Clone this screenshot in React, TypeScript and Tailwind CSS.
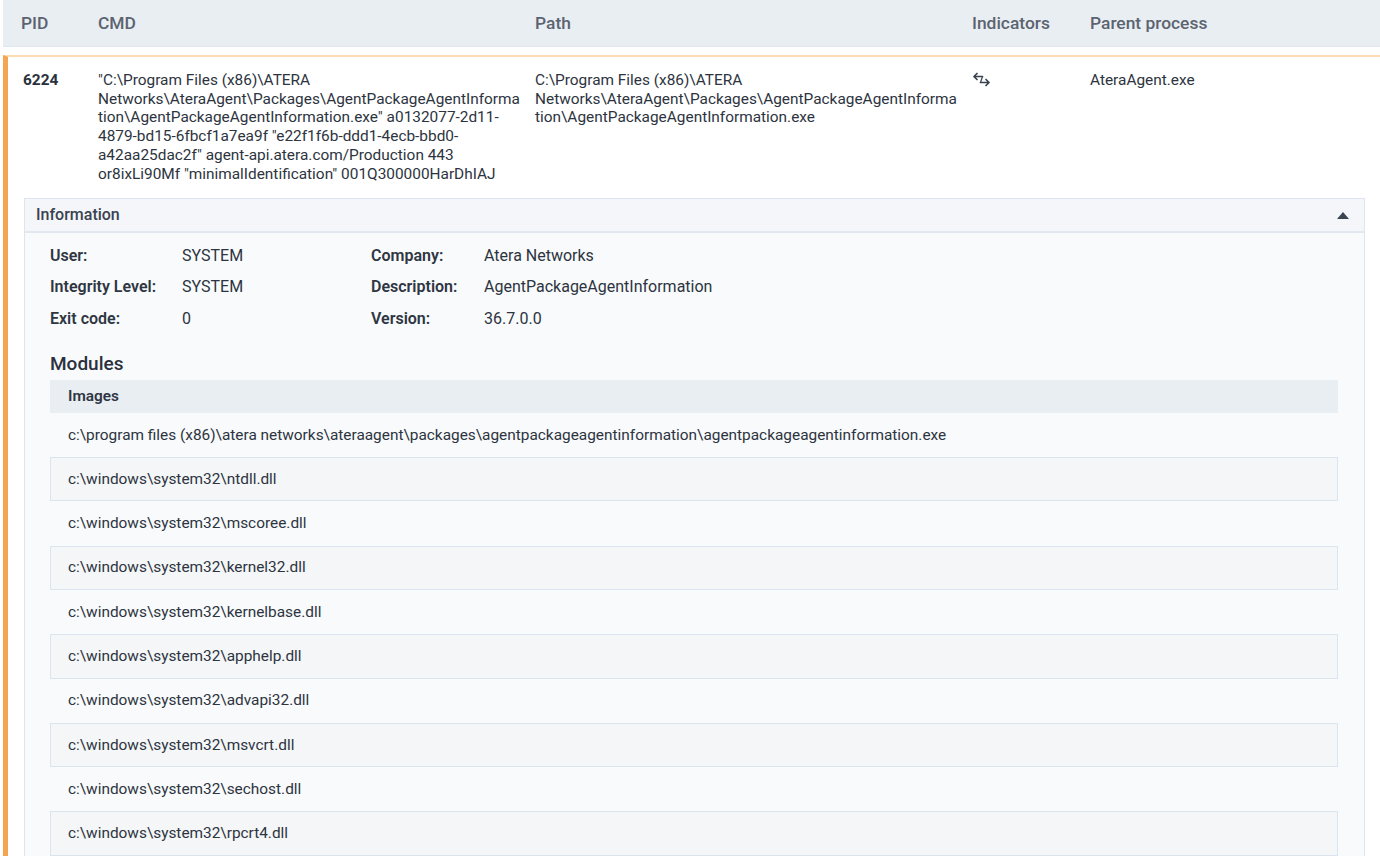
import React from 'react';

const font = { fontFamily: 'Roboto, "Liberation Sans", sans-serif' };

const cmd =
  '"C:\\Program Files (x86)\\ATERA Networks\\AteraAgent\\Packages\\AgentPackageAgentInformation\\AgentPackageAgentInformation.exe" a0132077-2d11-4879-bd15-6fbcf1a7ea9f "e22f1f6b-ddd1-4ecb-bbd0-a42aa25dac2f" agent-api.atera.com/Production 443 or8ixLi90Mf "minimalIdentification" 001Q300000HarDhIAJ';

const path =
  'C:\\Program Files (x86)\\ATERA Networks\\AteraAgent\\Packages\\AgentPackageAgentInformation\\AgentPackageAgentInformation.exe';

const modules = [
  'c:\\program files (x86)\\atera networks\\ateraagent\\packages\\agentpackageagentinformation\\agentpackageagentinformation.exe',
  'c:\\windows\\system32\\ntdll.dll',
  'c:\\windows\\system32\\mscoree.dll',
  'c:\\windows\\system32\\kernel32.dll',
  'c:\\windows\\system32\\kernelbase.dll',
  'c:\\windows\\system32\\apphelp.dll',
  'c:\\windows\\system32\\advapi32.dll',
  'c:\\windows\\system32\\msvcrt.dll',
  'c:\\windows\\system32\\sechost.dll',
  'c:\\windows\\system32\\rpcrt4.dll',
];

function SwapIcon() {
  return (
    <svg width="20" height="16" viewBox="0 0 20 16" fill="none" stroke="#3a4350" strokeWidth="1.7" strokeLinecap="round" strokeLinejoin="round">
      <path d="M10.5 4.5H2M5 1.5L2 4.5l3 3" />
      <path d="M8.5 10.5H17M14 7.5l3 3-3 3" />
      <path d="M10.5 4.5l-2 6" strokeWidth="1.2" />
    </svg>
  );
}

function Info({ label, value }: { label: string; value: string }) {
  return (
    <>
      <div className="h-[31.5px] flex items-center font-semibold text-[#2f3642]">{label}</div>
      <div className="h-[31.5px] flex items-center text-[#2d3440]">{value}</div>
    </>
  );
}

export default function App() {
  return (
    <div className="w-[1380px] h-[856px] overflow-hidden bg-white text-[15.4px] leading-[18.7px] text-[#2d3440]" style={font}>
      {/* Header */}
      <div className="ml-[3px] h-[47px] bg-[#e9eef3] border-b border-[#dfe6ed] pl-[18px] grid grid-cols-[77px_437px_437px_118px_1fr] items-center text-[17.4px] font-medium text-[#5b6370]">
        <div>PID</div>
        <div>CMD</div>
        <div>Path</div>
        <div>Indicators</div>
        <div>Parent process</div>
      </div>

      {/* Row */}
      <div className="mt-[8px] ml-[3px] border-l-[5px] border-l-[#f5a450] border-t-2 border-t-[#fddcb2]">
        <div className="pl-[15px] pt-[14px] grid grid-cols-[75px_437px_437px_118px_1fr]">
          <div className="font-bold text-[#2a313c]">6224</div>
          <div className="pr-[15px] break-words">{cmd}</div>
          <div className="pr-[15px] break-words">{path}</div>
          <div className="pt-[1px]"><SwapIcon /></div>
          <div>AteraAgent.exe</div>
        </div>

        {/* Information panel */}
        <div className="mt-[15px] ml-[16px] mr-[15px] border border-[#dde5ee] bg-[#f8fafc]">
          <div className="h-[34px] flex items-center justify-between px-[11px] bg-[#f4f6f9] border-b-2 border-[#e2e8f0]">
            <span className="text-[16px] font-medium text-[#3a4250]">Information</span>
            <svg width="14" height="8" viewBox="0 0 14 8" className="mr-[3px]">
              <path d="M1 8L7 1l6 7z" fill="#3b4552" />
            </svg>
          </div>
          <div className="pl-[25px] pr-[26px] pt-[7px]">
            <div className="grid grid-cols-[132px_189px_113px_1fr] text-[16px]">
              <Info label="User:" value="SYSTEM" />
              <Info label="Company:" value="Atera Networks" />
              <Info label="Integrity Level:" value="SYSTEM" />
              <Info label="Description:" value="AgentPackageAgentInformation" />
              <Info label="Exit code:" value="0" />
              <Info label="Version:" value="36.7.0.0" />
            </div>
            <div className="mt-[17px] mb-[4px] text-[19px] leading-[24px] font-medium text-[#2a313c]">Modules</div>
            <div className="h-[33px] flex items-center pl-[18px] bg-[#e9eef3] font-semibold text-[#2f3642]">Images</div>
            {modules.map((m, i) => (
              <div
                key={m}
                className={
                  i % 2 === 1
                    ? 'h-[44.3px] flex items-center pl-[17px] bg-[#f4f6f8] border border-[#dbe5ef]'
                    : 'h-[44.3px] flex items-center pl-[18px]'
                }
              >
                {m}
              </div>
            ))}
          </div>
        </div>
      </div>
    </div>
  );
}
